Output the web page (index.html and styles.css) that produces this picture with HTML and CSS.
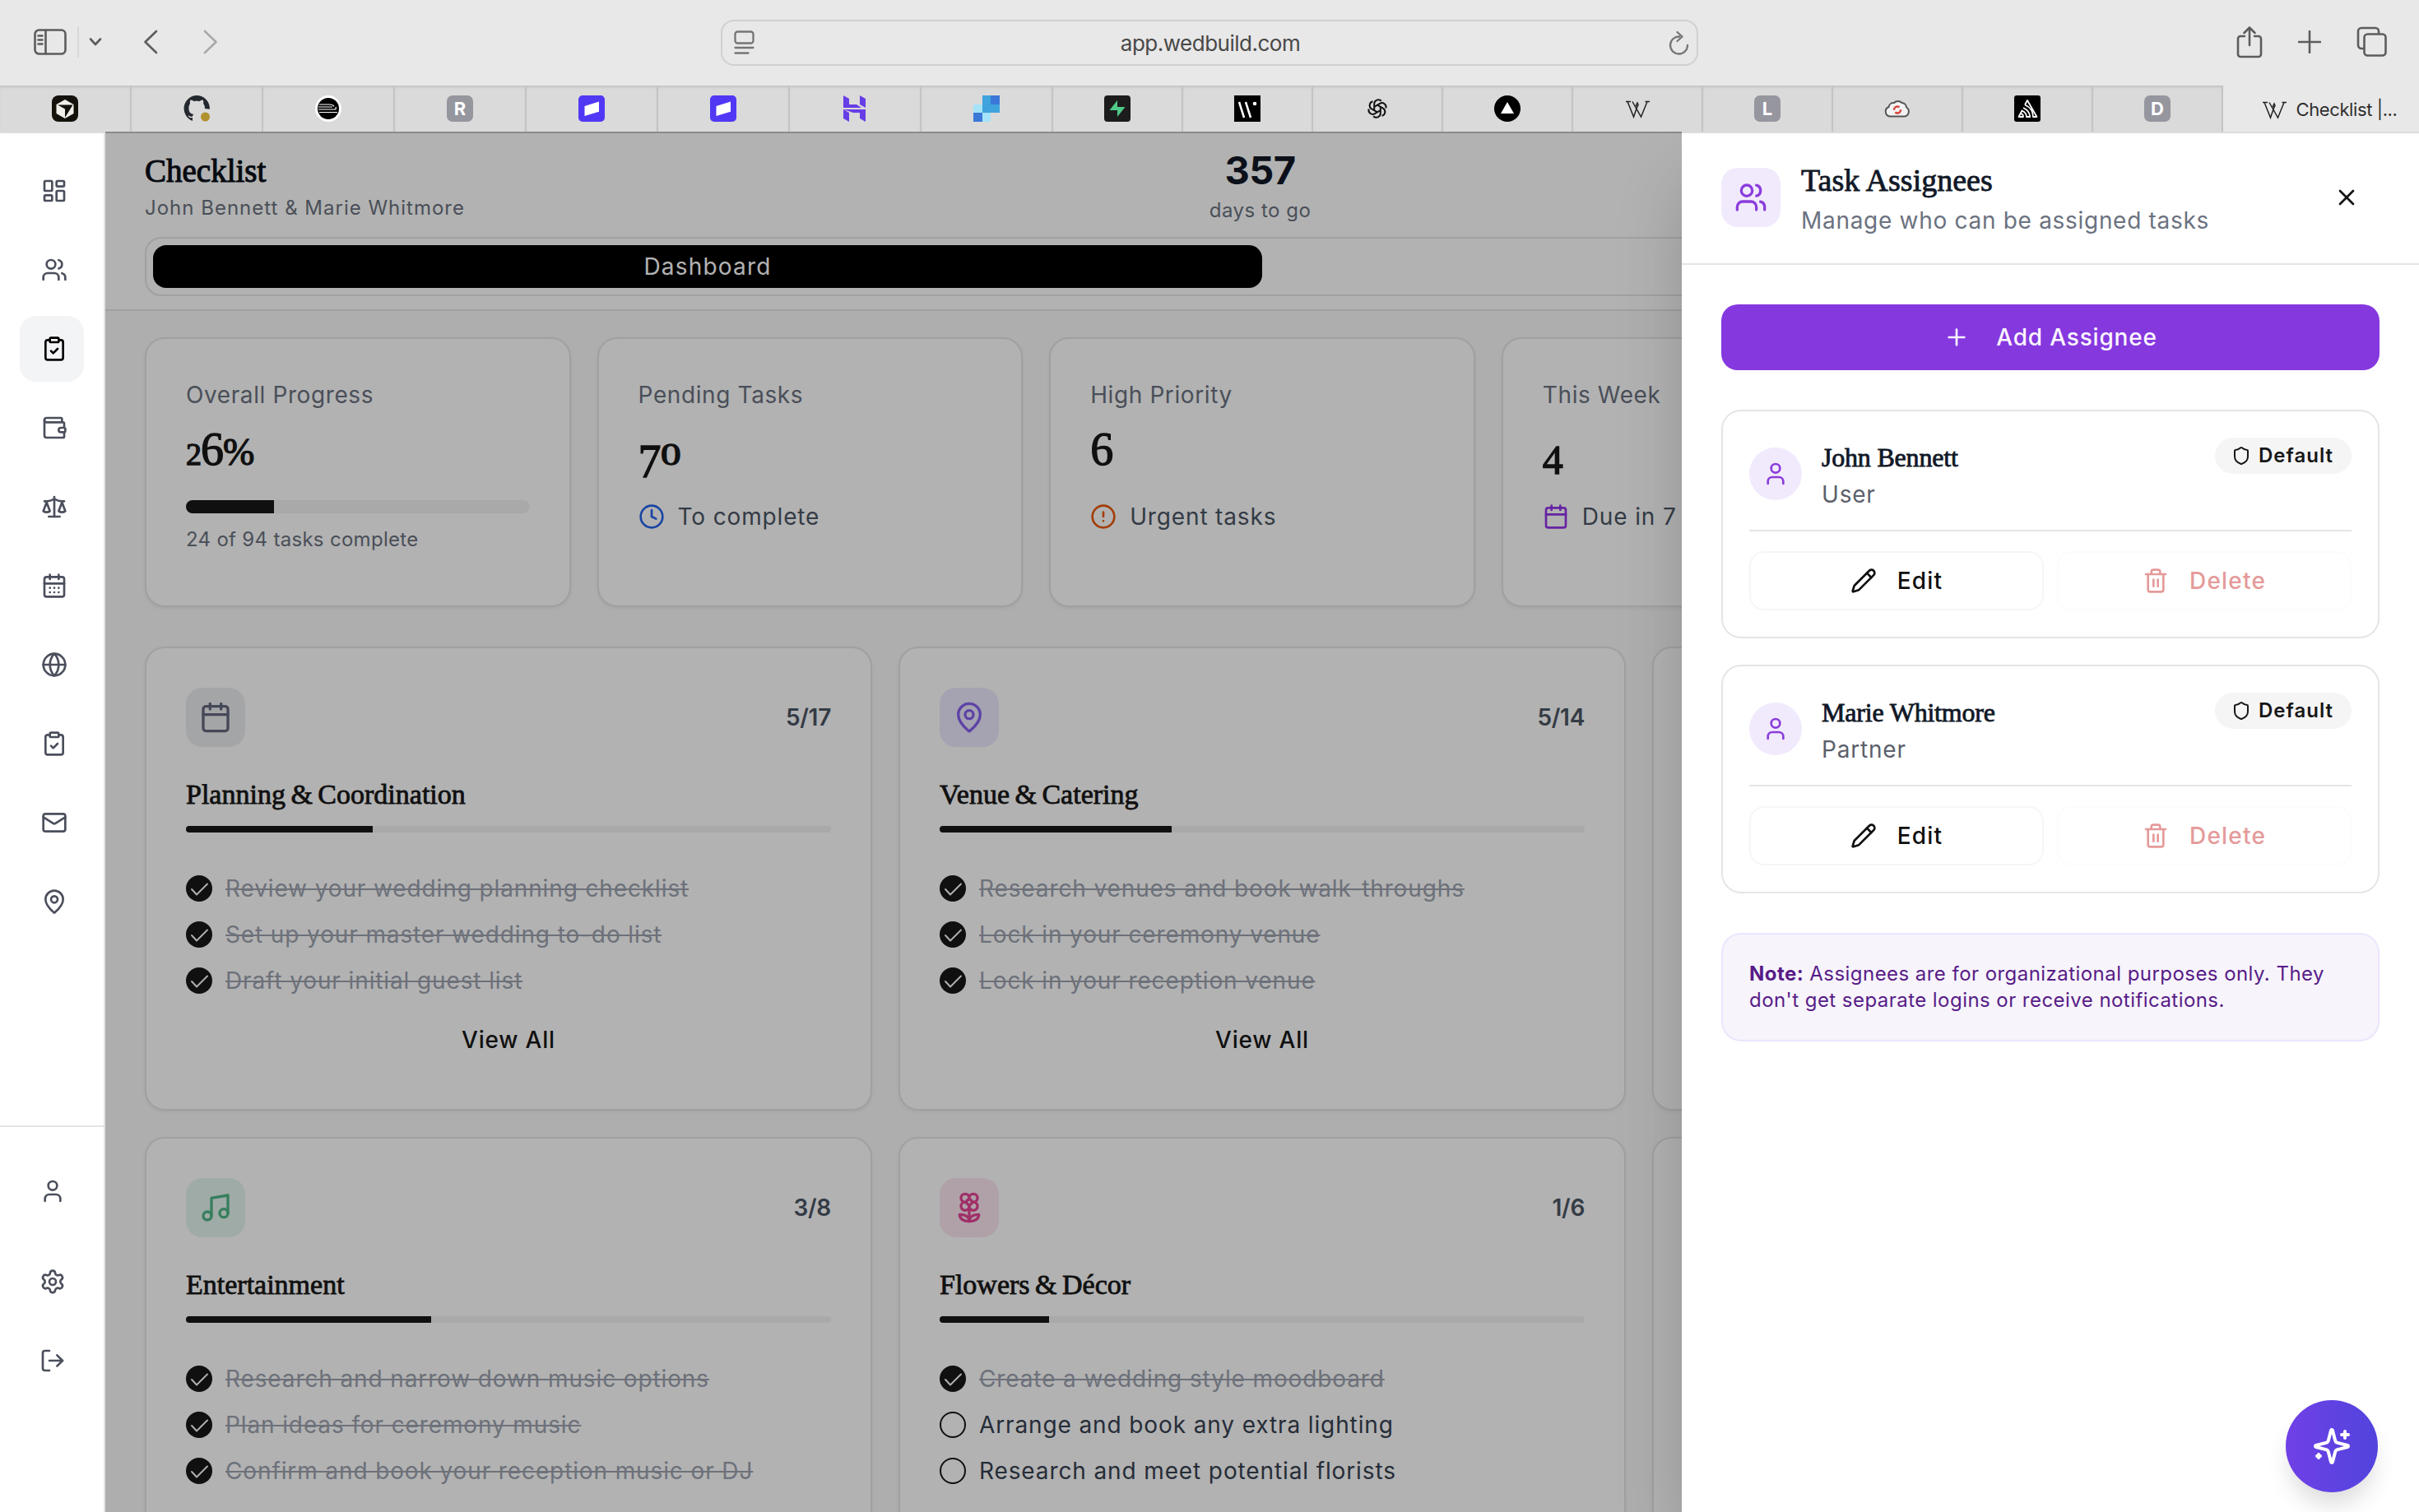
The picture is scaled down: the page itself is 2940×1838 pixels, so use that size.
FILE: index.html
```html
<!DOCTYPE html>
<html lang="en">
   <head>
      <meta charset="UTF-8">
      <meta name="viewport" content="width=device-width, initial-scale=1.0"/>
      <title>Checklist | Wedbuild</title>
      <link rel="stylesheet" href="styles.css">
   </head>
   <body>

      <!-- icon sprite -->
      <svg class="sprite">
         <symbol id="i-grid" viewBox="0 0 24 24"><rect x="3" y="3" width="7" height="9" rx="1"/><rect x="14" y="3" width="7" height="5" rx="1"/><rect x="14" y="12" width="7" height="9" rx="1"/><rect x="3" y="16" width="7" height="5" rx="1"/></symbol>
         <symbol id="i-users" viewBox="0 0 24 24"><path d="M16 21v-2a4 4 0 0 0-4-4H6a4 4 0 0 0-4 4v2"/><circle cx="9" cy="7" r="4"/><path d="M22 21v-2a4 4 0 0 0-3-3.87"/><path d="M16 3.13a4 4 0 0 1 0 7.75"/></symbol>
         <symbol id="i-clipboard" viewBox="0 0 24 24"><rect x="8" y="2" width="8" height="4" rx="1"/><path d="M16 4h2a2 2 0 0 1 2 2v14a2 2 0 0 1-2 2H6a2 2 0 0 1-2-2V6a2 2 0 0 1 2-2h2"/><path d="m9 14 2 2 4-4"/></symbol>
         <symbol id="i-wallet" viewBox="0 0 24 24"><path d="M19 7V4a1 1 0 0 0-1-1H5a2 2 0 0 0 0 4h15a1 1 0 0 1 1 1v4h-3a2 2 0 0 0 0 4h3a1 1 0 0 0 1-1v-2a1 1 0 0 0-1-1"/><path d="M3 5v14a2 2 0 0 0 2 2h15a1 1 0 0 0 1-1v-4"/></symbol>
         <symbol id="i-scale" viewBox="0 0 24 24"><path d="m16 16 3-8 3 8c-.87.65-1.92 1-3 1s-2.13-.35-3-1Z"/><path d="m2 16 3-8 3 8c-.87.65-1.92 1-3 1s-2.13-.35-3-1Z"/><path d="M7 21h10"/><path d="M12 3v18"/><path d="M3 7h2c2 0 5-1 7-2 2 1 5 2 7 2h2"/></symbol>
         <symbol id="i-days" viewBox="0 0 24 24"><path d="M8 2v4"/><path d="M16 2v4"/><rect x="3" y="4" width="18" height="18" rx="2"/><path d="M3 10h18"/><path d="M8 14h.01M12 14h.01M16 14h.01M8 18h.01M12 18h.01M16 18h.01"/></symbol>
         <symbol id="i-calendar" viewBox="0 0 24 24"><path d="M8 2v4"/><path d="M16 2v4"/><rect x="3" y="4" width="18" height="18" rx="2"/><path d="M3 10h18"/></symbol>
         <symbol id="i-globe" viewBox="0 0 24 24"><circle cx="12" cy="12" r="10"/><path d="M12 2a14.5 14.5 0 0 0 0 20 14.5 14.5 0 0 0 0-20"/><path d="M2 12h20"/></symbol>
         <symbol id="i-mail" viewBox="0 0 24 24"><rect x="2" y="4" width="20" height="16" rx="2"/><path d="m22 7-8.97 5.7a1.94 1.94 0 0 1-2.06 0L2 7"/></symbol>
         <symbol id="i-pin" viewBox="0 0 24 24"><path d="M20 10c0 4.993-5.539 10.193-7.399 11.799a1 1 0 0 1-1.202 0C9.539 20.193 4 14.993 4 10a8 8 0 0 1 16 0"/><circle cx="12" cy="10" r="3"/></symbol>
         <symbol id="i-user" viewBox="0 0 24 24"><path d="M19 21v-2a4 4 0 0 0-4-4H9a4 4 0 0 0-4 4v2"/><circle cx="12" cy="7" r="4"/></symbol>
         <symbol id="i-settings" viewBox="0 0 24 24"><path d="M9.671 4.136a2.34 2.34 0 0 1 4.659 0 2.34 2.34 0 0 0 3.319 1.915 2.34 2.34 0 0 1 2.33 4.033 2.34 2.34 0 0 0 0 3.831 2.34 2.34 0 0 1-2.33 4.033 2.34 2.34 0 0 0-3.319 1.915 2.34 2.34 0 0 1-4.659 0 2.34 2.34 0 0 0-3.32-1.915 2.34 2.34 0 0 1-2.33-4.033 2.34 2.34 0 0 0 0-3.831A2.34 2.34 0 0 1 6.35 6.051a2.34 2.34 0 0 0 3.319-1.915"/><circle cx="12" cy="12" r="3"/></symbol>
         <symbol id="i-logout" viewBox="0 0 24 24"><path d="M9 21H5a2 2 0 0 1-2-2V5a2 2 0 0 1 2-2h4"/><path d="m16 17 5-5-5-5"/><path d="M21 12H9"/></symbol>
         <symbol id="i-clock" viewBox="0 0 24 24"><circle cx="12" cy="12" r="10"/><path d="M12 6v6l4 2"/></symbol>
         <symbol id="i-alert" viewBox="0 0 24 24"><circle cx="12" cy="12" r="10"/><path d="M12 8v4M12 16h.01"/></symbol>
         <symbol id="i-music" viewBox="0 0 24 24"><path d="M9 18V5l12-2v13"/><circle cx="6" cy="18" r="3"/><circle cx="18" cy="16" r="3"/></symbol>
         <symbol id="i-flower" viewBox="0 0 24 24"><path d="M12 5a3 3 0 1 1 3 3m-3-3a3 3 0 1 0-3 3m3-3v1M9 8a3 3 0 1 0 3 3M9 8h1m5 0a3 3 0 1 1-3 3m3-3h-1m-2 3v-1"/><circle cx="12" cy="8" r="2"/><path d="M12 10v12"/><path d="M12 22c4.2 0 7-1.667 7-5-4.2 0-7 1.667-7 5Z"/><path d="M12 22c-4.2 0-7-1.667-7-5 4.2 0 7 1.667 7 5Z"/></symbol>
         <symbol id="i-x" viewBox="0 0 24 24"><path d="M18 6 6 18M6 6l12 12"/></symbol>
         <symbol id="i-plus" viewBox="0 0 24 24"><path d="M5 12h14M12 5v14"/></symbol>
         <symbol id="i-shield" viewBox="0 0 24 24"><path d="M20 13c0 5-3.5 7.5-7.66 8.95a1 1 0 0 1-.67-.01C7.5 20.5 4 18 4 13V6a1 1 0 0 1 1-1c2 0 4.5-1.2 6.24-2.72a1.17 1.17 0 0 1 1.52 0C14.51 3.81 17 5 19 5a1 1 0 0 1 1 1z"/></symbol>
         <symbol id="i-pencil" viewBox="0 0 24 24"><path d="M21.174 6.812a1 1 0 0 0-3.986-3.987L3.842 16.174a2 2 0 0 0-.5.83l-1.321 4.352a.5.5 0 0 0 .623.622l4.353-1.32a2 2 0 0 0 .83-.497z"/><path d="m15 5 4 4"/></symbol>
         <symbol id="i-trash" viewBox="0 0 24 24"><path d="M3 6h18"/><path d="M19 6v14a2 2 0 0 1-2 2H7a2 2 0 0 1-2-2V6"/><path d="M8 6V4a2 2 0 0 1 2-2h4a2 2 0 0 1 2 2v2"/><path d="M10 11v6M14 11v6"/></symbol>
         <symbol id="i-sparkles" viewBox="0 0 24 24"><path d="M9.937 15.5A2 2 0 0 0 8.5 14.063l-6.135-1.582a.5.5 0 0 1 0-.962L8.5 9.936A2 2 0 0 0 9.937 8.5l1.582-6.135a.5.5 0 0 1 .963 0L14.063 8.5A2 2 0 0 0 15.5 9.937l6.135 1.581a.5.5 0 0 1 0 .964L15.5 14.063a2 2 0 0 0-1.437 1.437l-1.582 6.135a.5.5 0 0 1-.963 0z"/><path d="M20 3v4M22 5h-4M4 17v2M5 18H3"/></symbol>
         <symbol id="i-done" viewBox="0 0 32 32"><circle cx="16" cy="16" r="16" fill="#171717" stroke="none"/><path d="m7 17 6 6.500L26 10.500" stroke="#fff" stroke-width="1.900"/></symbol>
         <symbol id="i-todo" viewBox="0 0 32 32"><circle cx="16" cy="16" r="15" stroke="#171717" stroke-width="2"/></symbol>
         <symbol id="f-app" viewBox="0 0 32 32"><rect width="32" height="32" rx="5" fill="#5138f5"/><path d="M7.500 13 25 7.500v12.200L7.500 25z" fill="#fff"/></symbol>
         <symbol id="f-w" viewBox="0 0 32 32"><path d="M2 7.500h6M4 7.500l7.500 18.500L16 13M10 7.500 20.500 26 28 7.500M25.500 7.500H31M16 9l1 2.500-1 2-1.500-1.500z" fill="none" stroke="#222" stroke-width="1.500"/></symbol>
         <path id="strand" d="M12.200 18.200v-8a5 5 0 0 1 8.600-3.400"/>
      </svg>

      <!-- browser toolbar -->
      <div class="toolbar">
         <div class="tools tools-left">
            <svg class="line" width="40" height="32" viewBox="0 0 40 32"><rect x="1.500" y="1.500" width="37" height="29" rx="5"/><path d="M14.500 2v28M5.500 8.500h5M5.500 13.500h5M5.500 18.500h5"/></svg>
            <span class="tools-sep"></span>
            <svg class="line chevron" width="16" height="12" viewBox="0 0 16 12"><path d="m2 2.500 6 6.500 6-6.500"/></svg>
            <svg class="line back" width="18" height="30" viewBox="0 0 18 30"><path d="M16 2 2.500 15 16 28"/></svg>
            <svg class="line forward" width="18" height="30" viewBox="0 0 18 30"><path d="m2 2 13.500 13L2 28"/></svg>
         </div>
         <div class="address">
            <svg class="line" width="26" height="30" viewBox="0 0 26 30"><rect x="1.500" y="1.500" width="22" height="14" rx="3"/><path d="M1.500 21h22M1.500 27.500h16"/></svg>
            <span class="address-url">app.wedbuild.com</span>
            <svg class="line" width="26" height="30" viewBox="0 0 26 30"><path d="M14 7.500A10.500 10.500 0 1 0 24 18M11.500 2l6 5.500-6 5.500"/></svg>
         </div>
         <div class="tools tools-right">
            <svg class="line" width="32" height="40" viewBox="0 0 32 40"><path d="M10 13H5a3 3 0 0 0-3 3v19a3 3 0 0 0 3 3h22a3 3 0 0 0 3-3V16a3 3 0 0 0-3-3h-5M16 24V2.500M9.500 9 16 2.500 22.500 9"/></svg>
            <svg class="line" width="28" height="28" viewBox="0 0 28 28"><path d="M14 1v26M1 14h26"/></svg>
            <svg class="line" width="38" height="38" viewBox="0 0 38 38"><path d="M8 27H6a4 4 0 0 1-4-4V6a4 4 0 0 1 4-4h17a4 4 0 0 1 4 4v2"/><rect x="9.500" y="9.500" width="26" height="26" rx="4"/></svg>
         </div>
      </div>

      <!-- pinned tabs -->
      <div class="tabs">
         <div class="tab wide"><svg class="fav" viewBox="0 0 32 32"><rect width="32" height="32" rx="8" fill="#14120b"/><path d="M16 5l10.500 6v11L16 28 5.500 22V11z" fill="#f0efea"/><path d="M7 11.500h18.500L16 27V16.500z" fill="#14120b"/></svg></div>
         <div class="tab wide"><svg class="fav" viewBox="0 0 32 32"><path d="M16 0a16 16 0 0 0-5 31v-4c-3 .8-4.500-.5-5.500-2.500 3 .5 3 2 5.500 1 .2-1.300.6-2 1.300-2.600C8 22.500 6 19.500 6.500 14c.2-1.600.8-3 1.500-4-.3-1.300-.2-3 .4-4.500 1.800 0 3 .8 4.400 1.800 2-.6 4.500-.6 6.500 0 1.400-1 2.600-1.800 4.400-1.800.6 1.500.7 3.200.4 4.500 1.300 1.500 2 3.500 1.800 6l6 .8A16 16 0 0 0 16 0" fill="#24292f"/><circle cx="26.500" cy="26" r="5.500" fill="#b0912f"/></svg></div>
         <div class="tab wide"><svg class="fav" viewBox="0 0 32 32"><circle cx="16" cy="16" r="16" fill="#fff"/><circle cx="16" cy="16" r="13" fill="#000"/><path d="M5 11h12q5 0 6 2.500M4 14h17M4 17h20q2-.5 1-3M5 20.500h22" fill="none" stroke="#fff" stroke-width="1.200"/></svg></div>
         <div class="tab wide"><span class="fav letter">R</span></div>
         <div class="tab wide"><svg class="fav"><use href="#f-app"/></svg></div>
         <div class="tab wide"><svg class="fav"><use href="#f-app"/></svg></div>
         <div class="tab wide"><svg class="fav" viewBox="0 0 32 32"><path d="M2 0l7 4v7h9l6 4H2zM22 0l7 4v11l-7-4zM2 17h21l6 0v15l-7-4v-7h-8zM2 17l7 4v11l-7-4z" fill="#673de6"/></svg></div>
         <div class="tab wide"><svg class="fav" viewBox="0 0 32 32"><path d="M11 0h21v21H11z" fill="#3fa3dd"/><path d="M21 0h11v11H21z" fill="#3b78d8"/><path d="M0 11h11v21h10V21H0z" fill="#a5e3f8"/><path d="M0 21h11v11H0z" fill="#3b78d8"/></svg></div>
         <div class="tab"><svg class="fav" viewBox="0 0 32 32"><rect width="32" height="32" rx="4" fill="#1c1c1c"/><path d="M16 6v8h9.500L16 26v-8H6.500z" fill="#4fc987"/></svg></div>
         <div class="tab"><svg class="fav" viewBox="0 0 32 32"><path d="M0 0h32v32H0z"/><path d="m6 8 6 19M14 8l6 19" stroke="#fff" stroke-width="2.500"/><circle cx="25" cy="10" r="2.300" fill="#fff"/></svg></div>
         <div class="tab"><svg class="fav" viewBox="0 0 32 32" fill="none" stroke="#111" stroke-width="2"><use href="#strand"/><use href="#strand" transform="rotate(60 16 16)"/><use href="#strand" transform="rotate(120 16 16)"/><use href="#strand" transform="rotate(180 16 16)"/><use href="#strand" transform="rotate(240 16 16)"/><use href="#strand" transform="rotate(300 16 16)"/></svg></div>
         <div class="tab"><svg class="fav" viewBox="0 0 32 32"><circle cx="16" cy="16" r="16"/><path d="m16 8 8 14H8z" fill="#fff"/></svg></div>
         <div class="tab"><svg class="fav"><use href="#f-w"/></svg></div>
         <div class="tab"><span class="fav letter">L</span></div>
         <div class="tab"><svg class="fav" viewBox="0 0 32 32"><path d="M7 25.500a6 6 0 0 1-1.500-11.500 6 6 0 0 1 6.500-5 6.500 6.500 0 0 1 9.500 0 6 6 0 0 1 5.500 5.500A6 6 0 0 1 25 25.500z" fill="#f3f3f3" stroke="#555" stroke-width="2"/><circle cx="16" cy="17.500" r="4" fill="none" stroke="#d8463f" stroke-width="2.500" stroke-dasharray="9 3"/></svg></div>
         <div class="tab"><svg class="fav" viewBox="0 0 32 32"><rect width="32" height="32" rx="3"/><path d="M13 11.500 16 6l11.500 20H23c0-7-4-12-10-14.500M11 15c5 2.500 8 6 8.200 11H15c0-3.500-2-6-5.500-7.500L5.500 26H11c0-2-1-3.200-2.500-4" fill="none" stroke="#fff" stroke-width="1.800" stroke-linejoin="round"/></svg></div>
         <div class="tab"><span class="fav letter">D</span></div>
         <div class="tab current"><svg class="fav"><use href="#f-w"/></svg><span>Checklist |...</span></div>
      </div>

      <div class="app">
         <nav class="sidebar">
            <div class="nav-group">
               <a class="nav-item"><svg class="icon"><use href="#i-grid"/></svg></a>
               <a class="nav-item"><svg class="icon"><use href="#i-users"/></svg></a>
               <a class="nav-item active"><svg class="icon"><use href="#i-clipboard"/></svg></a>
               <a class="nav-item"><svg class="icon"><use href="#i-wallet"/></svg></a>
               <a class="nav-item"><svg class="icon"><use href="#i-scale"/></svg></a>
               <a class="nav-item"><svg class="icon"><use href="#i-days"/></svg></a>
               <a class="nav-item"><svg class="icon"><use href="#i-globe"/></svg></a>
               <a class="nav-item"><svg class="icon"><use href="#i-clipboard"/></svg></a>
               <a class="nav-item"><svg class="icon"><use href="#i-mail"/></svg></a>
               <a class="nav-item"><svg class="icon"><use href="#i-pin"/></svg></a>
            </div>
            <div class="nav-footer">
               <a class="nav-item account"><svg class="icon"><use href="#i-user"/></svg></a>
               <a class="nav-item"><svg class="icon"><use href="#i-settings"/></svg></a>
               <a class="nav-item"><svg class="icon"><use href="#i-logout"/></svg></a>
            </div>
         </nav>

         <main class="main">
            <header class="page-header">
               <div class="page-title">
                  <div>
                     <h1>Checklist</h1>
                     <p class="couple">John Bennett &amp; Marie Whitmore</p>
                  </div>
                  <div class="countdown">
                     <strong>357</strong>
                     <span>days to go</span>
                  </div>
                  <div></div>
               </div>
               <div class="switch">
                  <span class="switch-item on">Dashboard</span>
                  <span class="switch-item"></span>
               </div>
            </header>

            <section class="stats">
               <div class="card stat">
                  <p class="stat-label">Overall Progress</p>
                  <p class="stat-value"><span class="n-small">2</span><span class="n-tall">6</span>%</p>
                  <div class="bar"><div class="bar-fill" style="width: 25.6%"></div></div>
                  <p class="stat-small">24 of 94 tasks complete</p>
               </div>
               <div class="card stat">
                  <p class="stat-label">Pending Tasks</p>
                  <p class="stat-value"><span class="n-drop">7</span><span class="n-small zero">0</span></p>
                  <p class="stat-note"><svg class="icon blue"><use href="#i-clock"/></svg>To complete</p>
               </div>
               <div class="card stat">
                  <p class="stat-label">High Priority</p>
                  <p class="stat-value"><span class="n-tall">6</span></p>
                  <p class="stat-note"><svg class="icon orange"><use href="#i-alert"/></svg>Urgent tasks</p>
               </div>
               <div class="card stat">
                  <p class="stat-label">This Week</p>
                  <p class="stat-value"><span class="n-drop four">4</span></p>
                  <p class="stat-note"><svg class="icon purple"><use href="#i-calendar"/></svg>Due in 7</p>
               </div>
               <div class="card stat"></div>
            </section>

            <section class="categories">
               <div class="card category">
                  <div class="category-top"><span class="tile slate"><svg class="icon"><use href="#i-calendar"/></svg></span><b>5/17</b></div>
                  <h2>Planning &amp; Coordination</h2>
                  <div class="bar thin"><div class="bar-fill" style="width: 29%"></div></div>
                  <ul>
                     <li class="done"><svg class="check"><use href="#i-done"/></svg><span>Review your wedding planning checklist</span></li>
                     <li class="done"><svg class="check"><use href="#i-done"/></svg><span>Set up your master wedding to-do list</span></li>
                     <li class="done"><svg class="check"><use href="#i-done"/></svg><span>Draft your initial guest list</span></li>
                  </ul>
                  <a class="view-all">View All</a>
               </div>
               <div class="card category">
                  <div class="category-top"><span class="tile violet"><svg class="icon"><use href="#i-pin"/></svg></span><b>5/14</b></div>
                  <h2>Venue &amp; Catering</h2>
                  <div class="bar thin"><div class="bar-fill" style="width: 36%"></div></div>
                  <ul>
                     <li class="done"><svg class="check"><use href="#i-done"/></svg><span>Research venues and book walk-throughs</span></li>
                     <li class="done"><svg class="check"><use href="#i-done"/></svg><span>Lock in your ceremony venue</span></li>
                     <li class="done"><svg class="check"><use href="#i-done"/></svg><span>Lock in your reception venue</span></li>
                  </ul>
                  <a class="view-all">View All</a>
               </div>
               <div class="card category"></div>
               <div class="card category">
                  <div class="category-top"><span class="tile green"><svg class="icon"><use href="#i-music"/></svg></span><b>3/8</b></div>
                  <h2>Entertainment</h2>
                  <div class="bar thin"><div class="bar-fill" style="width: 38%"></div></div>
                  <ul>
                     <li class="done"><svg class="check"><use href="#i-done"/></svg><span>Research and narrow down music options</span></li>
                     <li class="done"><svg class="check"><use href="#i-done"/></svg><span>Plan ideas for ceremony music</span></li>
                     <li class="done"><svg class="check"><use href="#i-done"/></svg><span>Confirm and book your reception music or DJ</span></li>
                  </ul>
               </div>
               <div class="card category">
                  <div class="category-top"><span class="tile pink"><svg class="icon"><use href="#i-flower"/></svg></span><b>1/6</b></div>
                  <h2>Flowers &amp; Décor</h2>
                  <div class="bar thin"><div class="bar-fill" style="width: 17%"></div></div>
                  <ul>
                     <li class="done"><svg class="check"><use href="#i-done"/></svg><span>Create a wedding style moodboard</span></li>
                     <li><svg class="check"><use href="#i-todo"/></svg><span>Arrange and book any extra lighting</span></li>
                     <li><svg class="check"><use href="#i-todo"/></svg><span>Research and meet potential florists</span></li>
                  </ul>
               </div>
               <div class="card category"></div>
            </section>
            <div class="overlay"></div>
         </main>

         <aside class="drawer">
            <header class="drawer-header">
               <span class="tile lilac"><svg class="icon"><use href="#i-users"/></svg></span>
               <div class="drawer-title">
                  <h2>Task Assignees</h2>
                  <p>Manage who can be assigned tasks</p>
               </div>
               <svg class="icon close"><use href="#i-x"/></svg>
            </header>
            <div class="drawer-body">
               <button class="add"><svg class="icon"><use href="#i-plus"/></svg>Add Assignee</button>

               <div class="assignees">
                  <div class="assignee">
                     <div class="person">
                        <span class="avatar"><svg class="icon"><use href="#i-user"/></svg></span>
                        <div class="person-text">
                           <h3>John Bennett</h3>
                           <p>User</p>
                        </div>
                        <span class="badge"><svg class="icon"><use href="#i-shield"/></svg>Default</span>
                     </div>
                     <div class="actions">
                        <button class="action"><svg class="icon"><use href="#i-pencil"/></svg>Edit</button>
                        <button class="action delete"><svg class="icon"><use href="#i-trash"/></svg>Delete</button>
                     </div>
                  </div>
                  <div class="assignee">
                     <div class="person">
                        <span class="avatar"><svg class="icon"><use href="#i-user"/></svg></span>
                        <div class="person-text">
                           <h3>Marie Whitmore</h3>
                           <p>Partner</p>
                        </div>
                        <span class="badge"><svg class="icon"><use href="#i-shield"/></svg>Default</span>
                     </div>
                     <div class="actions">
                        <button class="action"><svg class="icon"><use href="#i-pencil"/></svg>Edit</button>
                        <button class="action delete"><svg class="icon"><use href="#i-trash"/></svg>Delete</button>
                     </div>
                  </div>
               </div>

               <p class="note"><b>Note:</b> Assignees are for organizational purposes only. They<br>don't get separate logins or receive notifications.</p>
            </div>
            <button class="assistant"><svg class="icon"><use href="#i-sparkles"/></svg></button>
         </aside>
      </div>
   </body>
</html>
```
FILE: styles.css
```css
*
{
   box-sizing: border-box;
   margin: 0;
   padding: 0;
}

body
{
   display: flex;
   flex-direction: column;
   height: 1838px;
   overflow: hidden;
   background: #fff;
   font-family: "Inter", sans-serif;
   font-size: 28px;
   line-height: 40px;
}

h1, h2, h3, .stat-value
{
   font-family: "Liberation Serif", serif;
   font-weight: normal;
   letter-spacing: 0;
   -webkit-text-stroke: 0.8px currentColor;
}

ul
{
   list-style: none;
}

button
{
   border: 0;
   font: inherit;
}

.sprite
{
   position: absolute;
   width: 0;
   height: 0;
}

.icon
{
   flex: none;
   width: 32px;
   height: 32px;
   fill: none;
   stroke: currentColor;
   stroke-width: 2;
   stroke-linecap: round;
   stroke-linejoin: round;
}

/* browser chrome */
.toolbar
{
   display: grid;
   grid-template-columns: 1fr 1188px 1fr;
   align-items: center;
   flex: none;
   height: 104px;
   background: #e8e8e8;
}

.line
{
   flex: none;
   fill: none;
   stroke: #5c5c5c;
   stroke-width: 2.6;
   stroke-linecap: round;
   stroke-linejoin: round;
}

.tools
{
   display: flex;
   align-items: center;
   padding-bottom: 2px;
}

.tools-left
{
   padding-left: 41px;
}

.tools-sep
{
   width: 2px;
   height: 38px;
   margin: 0 12px 0 13px;
   background: #d8d8d8;
}

.back
{
   margin-left: 50px;
}

.forward
{
   margin-left: 55px;
   stroke: #a8a8a8;
}

.tools-right
{
   justify-content: flex-end;
   gap: 43px;
   padding-right: 38px;
}

.address
{
   display: flex;
   align-items: center;
   justify-content: space-between;
   height: 56px;
   padding: 0 9px 0 14px;
   border: 2px solid #d0d0d0;
   border-radius: 16px;
}

.address .line
{
   stroke: #757575;
   stroke-width: 2.3;
}

.address-url
{
   padding: 1px 3px 0 0;
   color: #484848;
   font-size: 26px;
   letter-spacing: -0.5px;
}

.tabs
{
   display: flex;
   flex: none;
   height: 56px;
   background: #dadada;
}

.tab
{
   display: flex;
   align-items: center;
   justify-content: center;
   width: 158px;
   border-right: 2px solid #c4c4c4;
   box-shadow: inset 0 3px 3px -1px #c2c2c2;
}

.wide
{
   width: 160px;
}

.current
{
   flex: 1;
   gap: 11px;
   padding: 2px 0 0 19px;
   border: 0;
   background: #e8e8e8;
   box-shadow: none;
   color: #303030;
   font-size: 22px;
   letter-spacing: -0.4px;
}

.fav
{
   flex: none;
   width: 32px;
   height: 32px;
}

.letter
{
   border-radius: 7px;
   background: #96969f;
   color: #fff;
   font-size: 22px;
   font-weight: 700;
   line-height: 33px;
   text-align: center;
}

/* app shell */
.app
{
   display: flex;
   flex: 1;
   position: relative;
   overflow: hidden;
}

.sidebar
{
   display: flex;
   flex-direction: column;
   flex: none;
   width: 128px;
   border-top: 2px solid #dcdcdc;
   border-right: 2px solid #e2e2e2;
   color: #4b4f5c;
}

.nav-group
{
   display: flex;
   flex-direction: column;
   gap: 16px;
   height: 1206px;
   padding: 30px 24px 0;
}

.nav-item
{
   display: flex;
   align-items: center;
   justify-content: center;
   width: 78px;
   height: 80px;
   padding-left: 6px;
   border-radius: 20px;
}

.active
{
   background: #f3f4f6;
   color: #000;
}

.nav-footer
{
   display: flex;
   flex-direction: column;
   gap: 16px;
   padding: 38px 22px;
   border-top: 2px solid #e5e5e5;
}

.account
{
   margin-bottom: 14px;
}

.main
{
   flex: 1;
   min-width: 0;
   position: relative;
   border-top: 2px solid #c8c8c8;
   background: #f9f9f9;
}

.overlay
{
   position: absolute;
   inset: -2px 0 0;
   background: rgba(0, 0, 0, 0.3);
}

.page-header
{
   height: 216px;
   padding: 19px 48px 0;
   border-bottom: 2px solid #e5e5e5;
   background: #fff;
}

.page-title
{
   display: grid;
   grid-template-columns: 1fr auto 1fr;
   height: 107px;
}

h1
{
   color: #0b0f19;
   font-size: 39px;
   line-height: 53px;
   -webkit-text-stroke-width: 1.1px;
}

.couple
{
   margin-top: 3px;
   color: #6b7280;
   font-size: 24px;
   letter-spacing: 1px;
   line-height: 32px;
}

.countdown
{
   display: flex;
   flex-direction: column;
   align-items: center;
   gap: 9px;
   padding-top: 2px;
   margin-right: 5px;
   color: #6b7280;
   font-size: 24px;
   letter-spacing: 0.5px;
   line-height: 32px;
}

.countdown strong
{
   color: #111827;
   font-size: 47px;
   letter-spacing: -0.5px;
   line-height: 48px;
}

.switch
{
   display: flex;
   height: 72px;
   padding: 8px;
   border: 2px solid #e5e5e5;
   border-radius: 20px;
}

.switch-item
{
   flex: 1;
   border-radius: 16px;
   letter-spacing: 1.2px;
   line-height: 52px;
   text-align: center;
}

.on
{
   background: #000;
   color: #fff;
}

.stats
{
   display: grid;
   grid-template-columns: repeat(5, 1fr);
   gap: 32px;
   padding: 32px 48px 48px;
}

.card
{
   border: 2px solid #e5e5e5;
   border-radius: 24px;
   background: #fff;
   box-shadow: 0 2px 4px rgba(0, 0, 0, 0.05);
}

.stat
{
   height: 328px;
   padding: 48px;
}

.stat-label
{
   color: #6b7280;
   letter-spacing: 0.6px;
}

.stat-value
{
   height: 72px;
   margin-top: 14px;
   color: #171717;
   font-size: 46px;
   line-height: 72px;
   letter-spacing: -1px;
   -webkit-text-stroke-width: 1.3px;
}

/* old-style figures: 0 and 2 sit at x-height, 4 and 7 hang below the line */
.n-small, .n-tall, .n-drop
{
   display: inline-block;
   line-height: 1;
}

.n-small
{
   font-size: 38px;
}

.zero
{
   transform: scaleX(1.3);
   transform-origin: left;
}

.n-tall
{
   font-size: 56px;
}

.n-drop
{
   font-size: 56px;
   transform: translateY(15px);
}

.four
{
   font-size: 50px;
   transform: translateY(11px);
}

.bar
{
   height: 16px;
   margin-top: 22px;
   overflow: hidden;
   border-radius: 8px;
   background: #f3f3f3;
}

.bar-fill
{
   height: 100%;
   background: #171717;
}

.stat-small
{
   margin-top: 16px;
   color: #6b7280;
   font-size: 24px;
   letter-spacing: 0.3px;
   line-height: 32px;
}

.stat-note
{
   display: flex;
   align-items: center;
   gap: 16px;
   margin-top: 22px;
   color: #4b5563;
   letter-spacing: 0.85px;
   white-space: nowrap;
}

.blue
{
   color: #2563eb;
}

.orange
{
   color: #ea580c;
}

.purple
{
   color: #9333ea;
}

.categories
{
   display: grid;
   grid-template-columns: repeat(3, 1fr);
   gap: 32px;
   padding: 0 48px;
}

.category
{
   display: flex;
   flex-direction: column;
   height: 564px;
   padding: 48px;
}

.category-top
{
   display: flex;
   align-items: center;
   justify-content: space-between;
   margin-bottom: 33px;
   color: #4b5563;
}

.category-top b
{
   font-weight: 600;
   letter-spacing: -0.3px;
}

.category h2
{
   color: #171717;
   font-size: 34px;
   line-height: 49px;
   word-spacing: -2px;
}

.tile
{
   display: flex;
   align-items: center;
   justify-content: center;
   flex: none;
   width: 72px;
   height: 72px;
   border-radius: 20px;
}

.tile .icon
{
   width: 40px;
   height: 40px;
}

.slate
{
   background: #ebecf0;
   color: #64687d;
}

.violet
{
   background: #ede9fe;
   color: #8460ee;
}

.green
{
   background: #e4f5ee;
   color: #4fb587;
}

.pink
{
   background: #fce7f3;
   color: #e64595;
}

.lilac
{
   background: #f1eafd;
   color: #8b3ddb;
}

.thin
{
   flex: none;
   height: 8px;
   margin-top: 14px;
}

.category ul
{
   display: flex;
   flex-direction: column;
   gap: 16px;
   margin-top: 48px;
}

.category li
{
   display: flex;
   align-items: center;
   gap: 16px;
   color: #374151;
   letter-spacing: 0.88px;
   white-space: nowrap;
}

.category .done
{
   color: #9ca3af;
   letter-spacing: 0.88px;
   text-decoration: line-through;
}

.check
{
   flex: none;
   width: 32px;
   height: 32px;
   fill: none;
   stroke-linecap: round;
   stroke-linejoin: round;
}

.view-all
{
   margin-top: 32px;
   color: #171717;
   font-weight: 500;
   letter-spacing: 0.8px;
   text-align: center;
}

/* assignees drawer */
.drawer
{
   position: absolute;
   top: 0;
   right: 0;
   bottom: 0;
   width: 896px;
   border-top: 2px solid #dcdcdc;
   background: #fff;
   box-shadow: 0 50px 80px -10px rgba(0, 0, 0, 0.22);
}

.drawer-header
{
   display: flex;
   align-items: center;
   gap: 25px;
   height: 160px;
   padding: 0 72px 2px 48px;
   border-bottom: 2px solid #e5e5e5;
}

.drawer-title
{
   flex: 1;
   padding-top: 3px;
   color: #6b7280;
   letter-spacing: 0.7px;
}

.drawer-title h2
{
   margin-bottom: 5px;
   color: #111827;
   font-size: 38px;
   line-height: 48px;
}

.close
{
   color: #111;
}

.drawer-body
{
   display: flex;
   flex-direction: column;
   gap: 48px;
   padding: 48px;
}

.add
{
   display: flex;
   align-items: center;
   justify-content: center;
   gap: 32px;
   height: 80px;
   border-radius: 20px;
   background: #8638df;
   color: #faf5ff;
   font-weight: 500;
   letter-spacing: 0.8px;
}

.assignees
{
   display: flex;
   flex-direction: column;
   gap: 32px;
}

.assignee
{
   height: 278px;
   padding: 32px;
   border: 2px solid #e5e5e5;
   border-radius: 24px;
}

.person
{
   display: flex;
   align-items: center;
   gap: 24px;
   height: 112px;
   padding-bottom: 24px;
}

.avatar
{
   display: flex;
   align-items: center;
   justify-content: center;
   width: 64px;
   height: 64px;
   border-radius: 50%;
   background: #f1eafd;
   color: #8b3ddb;
}

.person-text
{
   flex: 1;
   padding-top: 1px;
   color: #5b606b;
   letter-spacing: 0.8px;
}

h3
{
   margin-bottom: 2px;
   color: #111827;
   font-size: 32px;
   letter-spacing: -0.2px;
   line-height: 46px;
}

.badge
{
   display: flex;
   align-items: center;
   align-self: flex-start;
   gap: 9px;
   height: 44px;
   padding: 0 22px 0 20px;
   border-radius: 22px;
   background: #f5f5f5;
   color: #171717;
   font-size: 24px;
   font-weight: 600;
   letter-spacing: 1px;
}

.badge .icon
{
   width: 24px;
   height: 24px;
}

.actions
{
   display: flex;
   gap: 16px;
   padding-top: 24px;
   border-top: 2px solid #e5e5e5;
}

.action
{
   display: flex;
   align-items: center;
   justify-content: center;
   flex: 1;
   gap: 25px;
   height: 72px;
   border: 2px solid #f6f6f6;
   border-radius: 18px;
   background: #fff;
   color: #0f0f0f;
   font-weight: 500;
   letter-spacing: 1.2px;
}

.delete
{
   border-color: #fcfcfc;
   color: #e59a9a;
}

.note
{
   height: 132px;
   padding: 32px;
   border: 2px solid #ece5fd;
   border-radius: 24px;
   background: #f7f4fc;
   color: #581c87;
   font-size: 24px;
   letter-spacing: 0.45px;
   line-height: 32px;
   white-space: nowrap;
}

.assistant
{
   display: flex;
   align-items: center;
   justify-content: center;
   position: absolute;
   right: 50px;
   bottom: 24px;
   width: 112px;
   height: 112px;
   border-radius: 50%;
   background: linear-gradient(90deg, #7040e6, #5144dd);
   box-shadow: 0 20px 30px -6px rgba(0, 0, 0, 0.15);
   color: #fff;
}

.assistant .icon
{
   width: 48px;
   height: 48px;
}
```
